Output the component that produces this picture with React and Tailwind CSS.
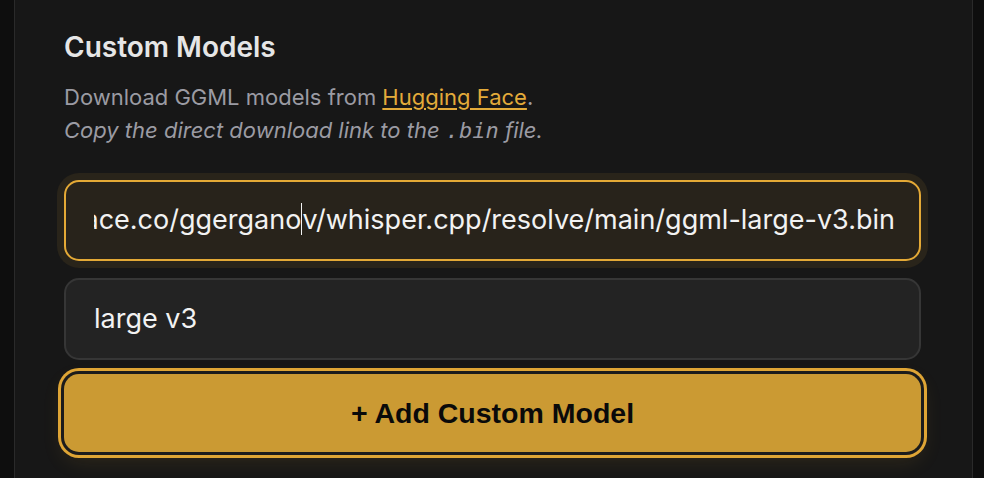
import { useState } from 'react';

const MODEL_URL = 'https://huggingface.co/ggerganov/whisper.cpp/resolve/main/ggml-large-v3.bin';
const CARET_AT = 'https://huggingface.co/ggergano'.length;

export default function App() {
  const [url] = useState(MODEL_URL);
  const [name] = useState('large v3');

  return (
    <div className="min-h-[478px] bg-[#0e0e0e] pl-[14px] pr-[11px] font-['Inter',sans-serif]">
      <section className="min-h-[478px] border-x border-[#2a2a2a] bg-[#171717] pl-[49px] pr-[51px] pt-[29px] pb-6">

        {/* Heading */}
        <h2 className="text-[28px] leading-[36px] font-semibold text-[#e6e6e6]">Custom Models</h2>

        {/* Help text */}
        <div className="mt-4 text-[22px] leading-[33px] text-[#9b9ba3]">
          <p>
            Download GGML models from{' '}
            <a className="text-[#e3ab3a] underline underline-offset-[3px] decoration-[2px]">Hugging Face</a>.
          </p>
          <p className="italic">
            Copy the direct download link to the{' '}
            <code className="font-['DejaVu_Sans_Mono',monospace] text-[22px] italic">.bin</code> file.
          </p>
        </div>

        {/* URL field (focused) */}
        <div className="mt-[33px] h-[81px] rounded-[15px] border-2 border-[#e4a936] bg-[#28231b] pl-[28px] pr-[24px] ring-[7px] ring-[#29241a] flex items-center">
          <div className="flex-1 overflow-hidden flex justify-end">
            <span className="whitespace-nowrap text-[27px] text-[#f2f2f2]">
              {url.slice(0, CARET_AT)}
              <span className="inline-block w-0 h-[32px] align-[-6px] border-l-[1.5px] border-[#f2f2f2]" />
              {url.slice(CARET_AT)}
            </span>
          </div>
        </div>

        {/* Display name field */}
        <div className="mt-[17px] h-[82px] rounded-[15px] border-2 border-[#363636] bg-[#232323] px-[28px] flex items-center">
          <span className="text-[27px] text-[#f2f2f2]">{name}</span>
        </div>

        {/* Submit */}
        <button className="mt-[14px] w-full h-[78px] rounded-[15px] bg-[#cb9a33] ring-[3px] ring-[#dfa535] ring-offset-[3px] ring-offset-[#1c1c1c] shadow-[0_8px_22px_rgba(220,160,50,0.14)] font-['Liberation_Sans',Arial,sans-serif] text-[28.5px] font-bold text-[#0a0a0a]">
          + Add Custom Model
        </button>
      </section>
    </div>
  );
}
